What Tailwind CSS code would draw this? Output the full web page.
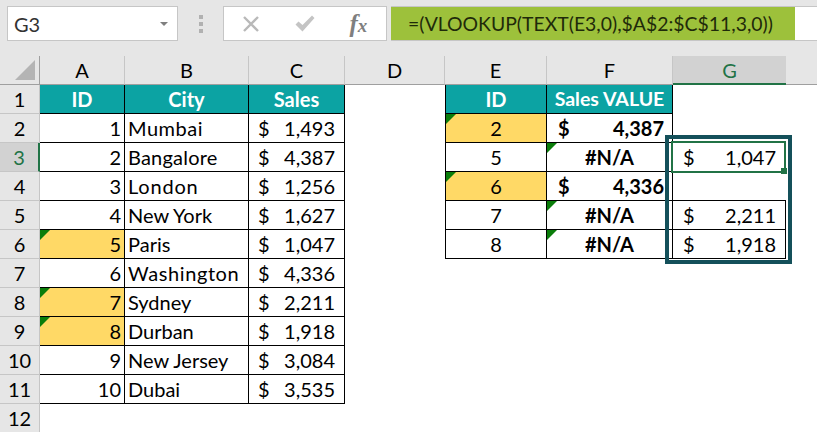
<!DOCTYPE html>
<html lang="en">
<head>
    <meta charset="UTF-8">
    <title>VLOOKUP sheet</title>
    <script src="https://cdn.jsdelivr.net/npm/@tailwindcss/browser@4"></script>
</head>
<body class="w-[817px] h-[432px] overflow-hidden bg-white font-['Lato','Liberation_Sans',sans-serif] text-[20px] text-black">
    <!-- Formula bar -->
    <div class="h-[56px] bg-[#e6e6e6] flex items-start pt-[6px] pl-[7px]">
        <div class="w-[171px] h-[35px] bg-white border border-[#c6c6c6] flex items-center justify-between pl-[6px] pr-[9px] text-[#333]">
            <span>G3</span>
            <span class="w-0 h-0 border-x-[4px] border-x-transparent border-t-[4px] border-t-[#7f7f7f]"></span>
        </div>
        <div class="w-[46px] h-[35px] flex flex-col items-center justify-center gap-[3px]">
            <span class="w-[4px] h-[4px] bg-[#b1b1b1]"></span>
            <span class="w-[4px] h-[4px] bg-[#b1b1b1]"></span>
            <span class="w-[4px] h-[4px] bg-[#b1b1b1]"></span>
        </div>
        <div class="w-[164px] h-[35px] bg-white border border-[#c6c6c6] flex items-center pl-[18px]">
            <svg class="w-[18px] h-[16px]" viewBox="0 0 18 16"><path d="M2 1l14 14M16 1L2 15" stroke="#b9b9b9" stroke-width="2.400" fill="none"/></svg>
            <svg class="ml-[35px] w-[20px] h-[17px]" viewBox="0 0 20 17"><path d="M0.500 9.500L3.500 6.500L7.500 10L17 0.500L19.500 3L7.500 16.500Z" fill="#c4c4c4"/></svg>
            <span class="ml-[34px] font-['Liberation_Serif',serif] italic font-bold text-[#7f7f7f] text-[25px] leading-none">f<span class="text-[19px]">x</span></span>
        </div>
        <div class="ml-[4px] w-[405px] h-[35px] bg-[#9dc13b] border-y border-[#c6c6c6] pl-[17px] leading-[33px] text-[19.4px] text-[#1f2a0a]">=(VLOOKUP(TEXT(E3,0),$A$2:$C$11,3,0))</div>
        <div class="w-[22px] h-[35px] bg-white border-y border-[#c6c6c6]"></div>
    </div>

    <!-- Sheet -->
    <div class="relative grid grid-cols-[40px_85px_124px_96px_100px_102px_126px_113px_31px] grid-rows-[29px] auto-rows-[29px] leading-[28px]">
        <!-- Column letters -->
        <div class="bg-[#e6e6e6] border-r border-b border-[#9f9f9f] flex items-end justify-end p-[4px]">
            <svg class="w-[20px] h-[20px]" viewBox="0 0 20 20"><path d="M20 0V20H0Z" fill="#b4b4b4"/></svg>
        </div>
        <div class="bg-[#e6e6e6] border-r border-b border-r-[#c6c6c6] border-b-[#9f9f9f] text-center">A</div>
        <div class="bg-[#e6e6e6] border-r border-b border-r-[#c6c6c6] border-b-[#9f9f9f] text-center">B</div>
        <div class="bg-[#e6e6e6] border-r border-b border-r-[#c6c6c6] border-b-[#9f9f9f] text-center">C</div>
        <div class="bg-[#e6e6e6] border-r border-b border-r-[#c6c6c6] border-b-[#9f9f9f] text-center">D</div>
        <div class="bg-[#e6e6e6] border-r border-b border-r-[#c6c6c6] border-b-[#9f9f9f] text-center">E</div>
        <div class="bg-[#e6e6e6] border-r border-b border-r-[#c6c6c6] border-b-[#9f9f9f] text-center">F</div>
        <div class="bg-[#d2d2d2] border-b-2 border-b-[#217346] text-center text-[#217346]">G</div>
        <div class="bg-[#e6e6e6] border-b border-b-[#9f9f9f]"></div>

        <!-- 1 -->
        <div class="bg-[#e6e6e6] border-r border-b border-[#c6c6c6] text-center">1</div>
        <div class="bg-[#0ca3a3] border-r border-b border-black text-center font-bold text-white">ID</div>
        <div class="bg-[#0ca3a3] border-r border-b border-black text-center font-bold text-white">City</div>
        <div class="bg-[#0ca3a3] border-r border-b border-black text-center font-bold text-white">Sales</div>
        <div class="col-start-6 bg-[#0ca3a3] border-l border-r border-b border-black text-center font-bold text-white">ID</div>
        <div class="bg-[#0ca3a3] border-r border-b border-black text-center font-bold text-white text-[19.5px]">Sales VALUE</div>

        <!-- 2 -->
        <div class="col-start-1 bg-[#e6e6e6] border-r border-b border-[#c6c6c6] text-center">2</div>
        <div class="border-r border-b border-black text-right pr-[3px]">1</div>
        <div class="border-r border-b border-black pl-[3px] tracking-[0.5px]">Mumbai</div>
        <div class="border-r border-b border-black flex justify-between px-[9px]"><span>$</span><span>1,493</span></div>
        <div class="col-start-6 relative bg-[#ffd966] border-l border-r border-b border-black text-center">
            <span class="absolute top-0 left-0 w-0 h-0 border-t-[10px] border-r-[10px] border-t-[#0a7d0a] border-r-transparent"></span>2
        </div>
        <div class="border-r border-b border-black flex justify-between pl-[11px] pr-[8px] font-bold"><span>$</span><span>4,387</span></div>

        <!-- 3 -->
        <div class="col-start-1 bg-[#d2d2d2] border-r-2 border-b border-r-[#217346] border-b-[#c6c6c6] text-center text-[#217346]">3</div>
        <div class="border-r border-b border-black text-right pr-[3px]">2</div>
        <div class="border-r border-b border-black pl-[3px] tracking-[0.2px]">Bangalore</div>
        <div class="border-r border-b border-black flex justify-between px-[9px]"><span>$</span><span>4,387</span></div>
        <div class="col-start-6 border-l border-r border-b border-black text-center">5</div>
        <div class="relative border-r border-b border-black text-center font-bold">
            <span class="absolute top-0 left-0 w-0 h-0 border-t-[10px] border-r-[10px] border-t-[#0a7d0a] border-r-transparent"></span>#N/A
        </div>
        <div class="flex justify-between pl-[10px] pr-[10px]"><span>$</span><span>1,047</span></div>

        <!-- 4 -->
        <div class="col-start-1 bg-[#e6e6e6] border-r border-b border-[#c6c6c6] text-center">4</div>
        <div class="border-r border-b border-black text-right pr-[3px]">3</div>
        <div class="border-r border-b border-black pl-[3px] tracking-[0.8px]">London</div>
        <div class="border-r border-b border-black flex justify-between px-[9px]"><span>$</span><span>1,256</span></div>
        <div class="col-start-6 relative bg-[#ffd966] border-l border-r border-b border-black text-center">
            <span class="absolute top-0 left-0 w-0 h-0 border-t-[10px] border-r-[10px] border-t-[#0a7d0a] border-r-transparent"></span>6
        </div>
        <div class="border-r border-b border-black flex justify-between pl-[11px] pr-[8px] font-bold"><span>$</span><span>4,336</span></div>

        <!-- 5 -->
        <div class="col-start-1 bg-[#e6e6e6] border-r border-b border-[#c6c6c6] text-center">5</div>
        <div class="border-r border-b border-black text-right pr-[3px]">4</div>
        <div class="border-r border-b border-black pl-[3px]">New York</div>
        <div class="border-r border-b border-black flex justify-between px-[9px]"><span>$</span><span>1,627</span></div>
        <div class="col-start-6 border-l border-r border-b border-black text-center">7</div>
        <div class="relative border-r border-b border-black text-center font-bold">
            <span class="absolute top-0 left-0 w-0 h-0 border-t-[10px] border-r-[10px] border-t-[#0a7d0a] border-r-transparent"></span>#N/A
        </div>
        <div class="border-t border-r border-b border-black flex justify-between pl-[10px] pr-[9px] -mt-px"><span>$</span><span>2,211</span></div>

        <!-- 6 -->
        <div class="col-start-1 bg-[#e6e6e6] border-r border-b border-[#c6c6c6] text-center">6</div>
        <div class="relative bg-[#ffd966] border-r border-b border-black text-right pr-[3px]">
            <span class="absolute top-0 left-0 w-0 h-0 border-t-[10px] border-r-[10px] border-t-[#0a7d0a] border-r-transparent"></span>5
        </div>
        <div class="border-r border-b border-black pl-[3px]">Paris</div>
        <div class="border-r border-b border-black flex justify-between px-[9px]"><span>$</span><span>1,047</span></div>
        <div class="col-start-6 border-l border-r border-b border-black text-center">8</div>
        <div class="relative border-r border-b border-black text-center font-bold">
            <span class="absolute top-0 left-0 w-0 h-0 border-t-[10px] border-r-[10px] border-t-[#0a7d0a] border-r-transparent"></span>#N/A
        </div>
        <div class="border-r border-b border-black flex justify-between pl-[10px] pr-[9px]"><span>$</span><span>1,918</span></div>

        <!-- 7 -->
        <div class="col-start-1 bg-[#e6e6e6] border-r border-b border-[#c6c6c6] text-center">7</div>
        <div class="border-r border-b border-black text-right pr-[3px]">6</div>
        <div class="border-r border-b border-black pl-[3px] tracking-[0.6px]">Washington</div>
        <div class="border-r border-b border-black flex justify-between px-[9px]"><span>$</span><span>4,336</span></div>

        <!-- 8 -->
        <div class="col-start-1 bg-[#e6e6e6] border-r border-b border-[#c6c6c6] text-center">8</div>
        <div class="relative bg-[#ffd966] border-r border-b border-black text-right pr-[3px]">
            <span class="absolute top-0 left-0 w-0 h-0 border-t-[10px] border-r-[10px] border-t-[#0a7d0a] border-r-transparent"></span>7
        </div>
        <div class="border-r border-b border-black pl-[3px]">Sydney</div>
        <div class="border-r border-b border-black flex justify-between px-[9px]"><span>$</span><span>2,211</span></div>

        <!-- 9 -->
        <div class="col-start-1 bg-[#e6e6e6] border-r border-b border-[#c6c6c6] text-center">9</div>
        <div class="relative bg-[#ffd966] border-r border-b border-black text-right pr-[3px]">
            <span class="absolute top-0 left-0 w-0 h-0 border-t-[10px] border-r-[10px] border-t-[#0a7d0a] border-r-transparent"></span>8
        </div>
        <div class="border-r border-b border-black pl-[3px]">Durban</div>
        <div class="border-r border-b border-black flex justify-between px-[9px]"><span>$</span><span>1,918</span></div>

        <!-- 10 -->
        <div class="col-start-1 bg-[#e6e6e6] border-r border-b border-[#c6c6c6] text-center">10</div>
        <div class="border-r border-b border-black text-right pr-[3px]">9</div>
        <div class="border-r border-b border-black pl-[3px]">New Jersey</div>
        <div class="border-r border-b border-black flex justify-between px-[9px]"><span>$</span><span>3,084</span></div>

        <!-- 11 -->
        <div class="col-start-1 bg-[#e6e6e6] border-r border-b border-[#c6c6c6] text-center">11</div>
        <div class="border-r border-b border-black text-right pr-[3px]">10</div>
        <div class="border-r border-b border-black pl-[3px]">Dubai</div>
        <div class="border-r border-b border-black flex justify-between px-[9px]"><span>$</span><span>3,535</span></div>

        <!-- 12 -->
        <div class="col-start-1 bg-[#e6e6e6] border-r border-[#c6c6c6] text-center">12</div>

        <!-- Selection overlays -->
        <div class="absolute left-[665px] top-[79px] w-[127px] h-[129px] border-[4px] border-[#14505a]"></div>
        <div class="absolute left-[671px] top-[85px] w-[115px] h-[32px] border-2 border-[#217346]"></div>
        <div class="absolute left-[781px] top-[112px] w-[6px] h-[6px] bg-[#217346]"></div>
    </div>
</body>
</html>
